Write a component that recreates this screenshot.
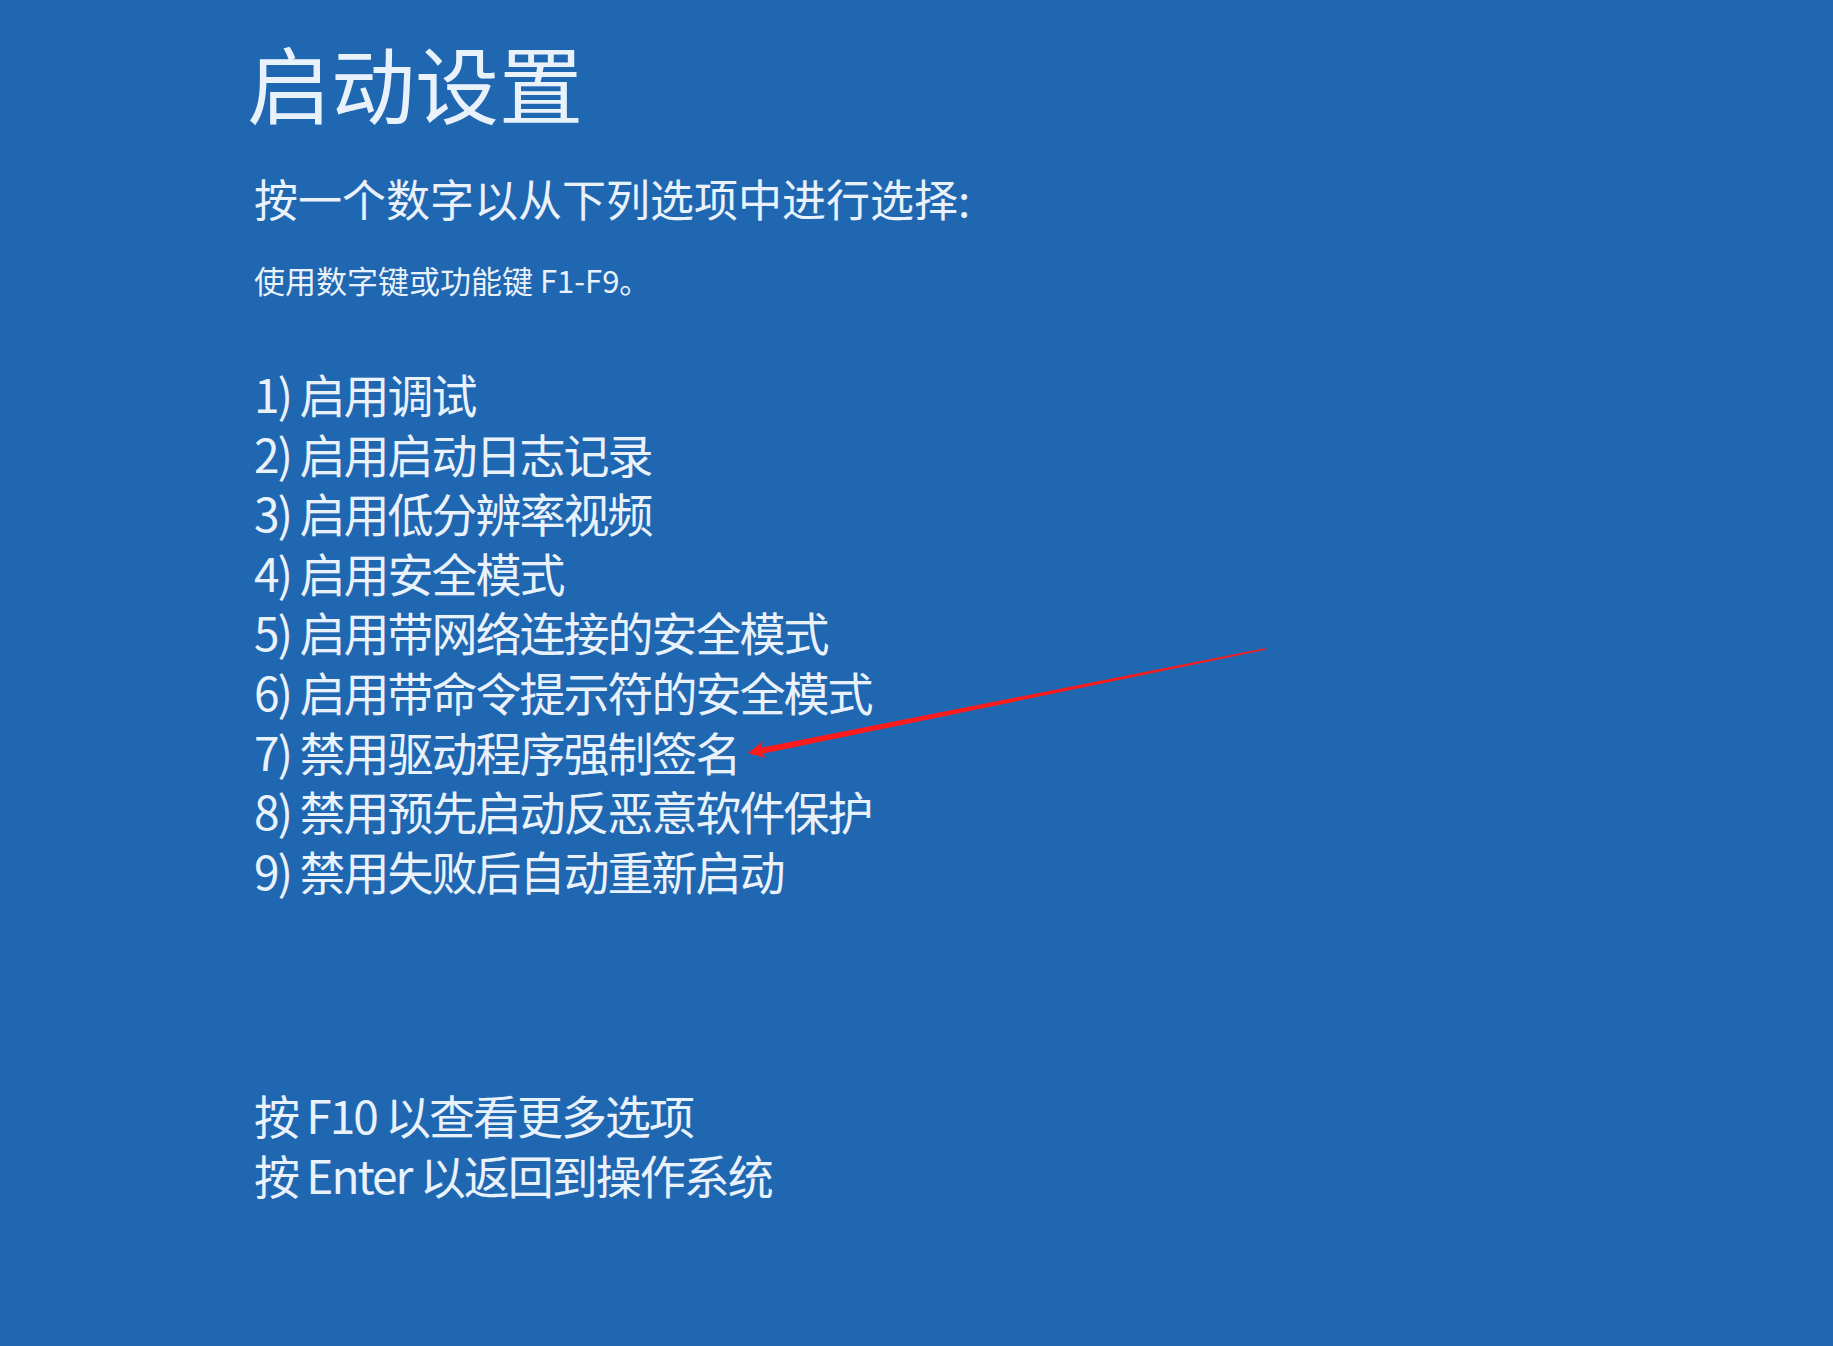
import React from "react";

const options = [
  "1) 启用调试",
  "2) 启用启动日志记录",
  "3) 启用低分辨率视频",
  "4) 启用安全模式",
  "5) 启用带网络连接的安全模式",
  "6) 启用带命令提示符的安全模式",
  "7) 禁用驱动程序强制签名",
  "8) 禁用预先启动反恶意软件保护",
  "9) 禁用失败后自动重新启动",
];

// red annotation arrow pointing at option 7
const Arrow = () => (
  <svg
    className="pointer-events-none absolute left-0 top-0"
    width="1833"
    height="1346"
    viewBox="0 0 1833 1346"
  >
    <polygon
      fill="#ff1b1b"
      points="748,753 766,758 762,753.8 1265.2,649.8 1264.8,648.2 761,747.8 763,741.5"
    />
  </svg>
);

const App = () => {
  return (
    <main
      className="relative min-h-[1346px] w-full overflow-hidden bg-[#2067b2] pl-[254px] text-[#e9f1fb]"
      style={{ fontFamily: '"Noto Sans CJK SC", "Noto Sans", sans-serif' }}
    >
      <h1 className="pt-[32px] text-[84px] leading-[100px] font-normal -ml-[7px]">
        启动设置
      </h1>
      <p className="mt-[36px] text-[44px] leading-[60px]">
        按一个数字以从下列选项中进行选择:
      </p>
      <p className="mt-[32px] text-[31px] leading-[40px]">
        使用数字键或功能键 F1-F9。
      </p>

      <ul className="mt-[64px] text-[46px] leading-[59.6px] tracking-[-2px]">
        {options.map((o) => (
          <li key={o}>{o}</li>
        ))}
      </ul>

      <div className="mt-[184px] text-[46px] leading-[60px] tracking-[-2px]">
        <p>按 F10 以查看更多选项</p>
        <p>按 Enter 以返回到操作系统</p>
      </div>

      <Arrow />
    </main>
  );
};

export default App;
